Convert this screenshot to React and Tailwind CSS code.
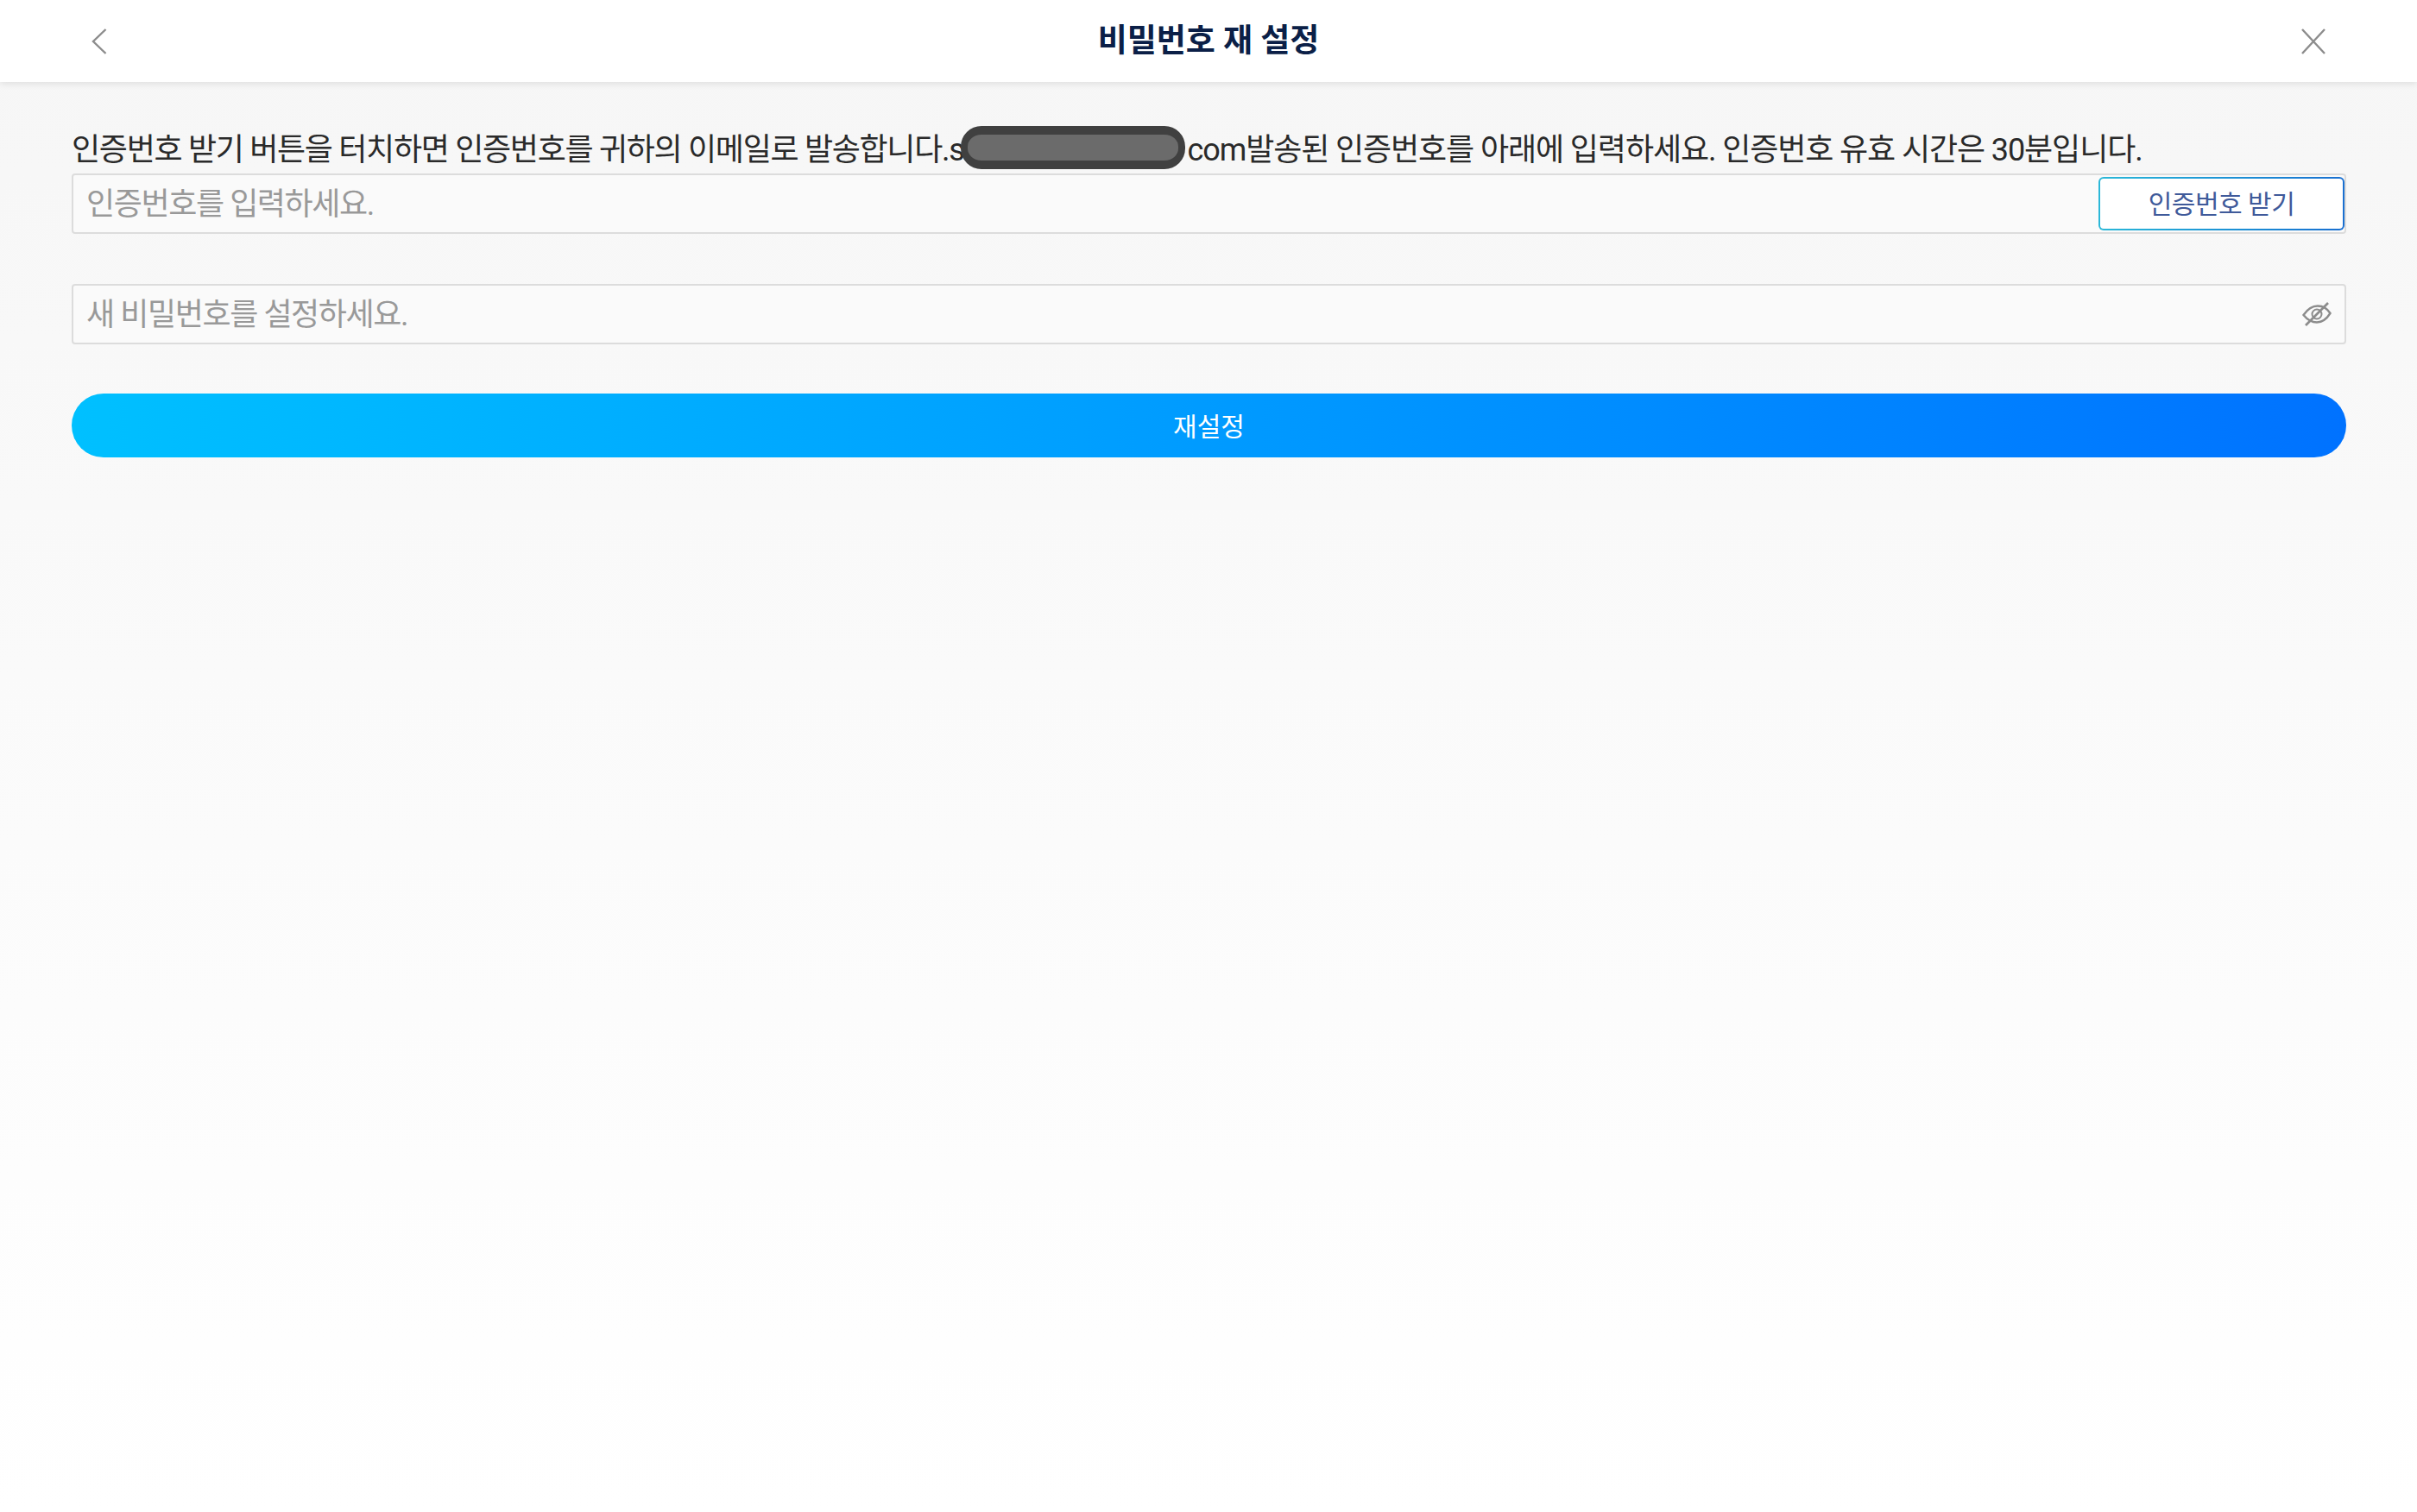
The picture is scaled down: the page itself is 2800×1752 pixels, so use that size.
const font = "font-['Roboto','Noto_Sans_CJK_KR',sans-serif]";

function Field({ placeholder, children }) {
  return (
    <div className="flex h-[70px] items-center justify-between rounded-[4px] border-2 border-[#dcdcdc] bg-[#fafafa]">
      <span className="pl-[15px] pt-[1px] text-[36px] tracking-[-1.4px] text-[#999999]">{placeholder}</span>
      {children}
    </div>
  );
}

function BackIcon() {
  return (
    <svg width="18" height="30" viewBox="0 0 18 30" fill="none" stroke="#8c8c8c" strokeWidth="2.4">
      <path d="M16.5 1 L2 15 L16.5 29" />
    </svg>
  );
}

function CloseIcon() {
  return (
    <svg width="28" height="30" viewBox="0 0 28 30" fill="none" stroke="#8c8c8c" strokeWidth="2.4">
      <path d="M1 1 L27 29 M27 1 L1 29" />
    </svg>
  );
}

function HiddenIcon() {
  return (
    <svg width="34" height="28" viewBox="0 0 34 28" fill="none" stroke="#8c8c8c" strokeWidth="2.4">
      <path d="M1.5 15 C7 7 12 4.5 18 4.5 C24 4.5 29 7.5 32.5 13 C28 20 23 23.5 17 23.5 C11 23.5 6 20.5 1.5 15 Z" />
      <circle cx="17" cy="14" r="5.5" strokeWidth="2" />
      <path d="M30 1 L4 27" strokeWidth="2.6" />
    </svg>
  );
}

export default function App() {
  return (
    <div className={`flex min-h-[1752px] flex-col bg-gradient-to-b from-[#f6f6f6] to-white ${font}`}>
      <header className="flex h-[95px] items-center justify-between bg-white pl-[106px] pr-[106px] shadow-[0_2px_8px_rgba(0,0,0,0.1)]">
        <div className="w-[28px]">
          <BackIcon />
        </div>
        <h1 className="text-[37px] font-bold text-[#0b1f47]">비밀번호 재 설정</h1>
        <CloseIcon />
      </header>

      <main className="flex flex-col pl-[83px] pr-[82px] pt-[49px]">
        <p className="h-[57px] whitespace-nowrap text-[36px] leading-[60px] tracking-[-1.3px] text-[#2a2a2a]">
          인증번호 받기 버튼을 터치하면 인증번호를 귀하의 이메일로 발송합니다.s
          <span className="ml-[-3px] mr-[2px] inline-block h-[50px] w-[260px] rounded-[24px] border-x-[8px] border-y-[10px] border-[#404040] bg-[#6b6b6b] align-[-10px]" />
          <span className="tracking-[-1.1px]">com발송된 인증번호를 아래에 입력하세요. 인증번호 유효 시간은 30분입니다.</span>
        </p>

        <Field placeholder="인증번호를 입력하세요.">
          <button className="flex h-[62px] w-[285px] items-center justify-center rounded-[6px] bg-gradient-to-r from-[#2bb8d8] to-[#1a6fd0] p-[2px]">
            <span className="flex h-full w-full items-center justify-center rounded-[4px] bg-white text-[30px] tracking-[-0.5px] text-[#3f5a9a]">
              인증번호 받기
            </span>
          </button>
        </Field>

        <div className="mt-[58px]">
          <Field placeholder="새 비밀번호를 설정하세요.">
            <div className="mr-[15px]">
              <HiddenIcon />
            </div>
          </Field>
        </div>

        <button className="mt-[57px] h-[74px] rounded-full bg-gradient-to-r from-[#00c0ff] to-[#0072ff] pt-[2px] text-[30px] text-white">
          재설정
        </button>
      </main>
    </div>
  );
}
